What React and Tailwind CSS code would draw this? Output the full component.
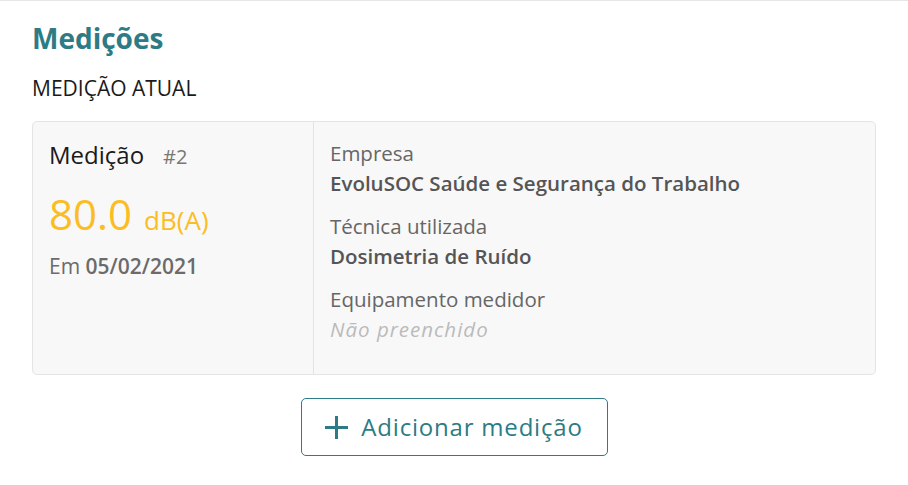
import React from "react";

const Field = ({ label, value, empty }) => (
  <div className="mb-[13px]">
    <div className="text-[20.5px] leading-[30px] text-[#666]">{label}</div>
    {empty ? (
      <div className="text-[20.5px] leading-[30px] italic tracking-[1px] text-[#bbb]">{value}</div>
    ) : (
      <div className="text-[20.5px] leading-[30px] font-semibold text-[#555]">{value}</div>
    )}
  </div>
);

const App = () => {
  return (
    <div
      className="min-h-screen bg-white border-t border-[#e6e6e6] px-8 pt-[20px]"
      style={{ fontFamily: '"Open Sans", "Noto Sans", sans-serif' }}
    >
      <h2 className="text-[28px] leading-[34px] font-bold text-[#2d7b85]">Medições</h2>
      <h3 className="mt-[19px] text-[21px] leading-[28px] text-[#1a1a1a]">MEDIÇÃO ATUAL</h3>

      <div className="mt-[19px] flex rounded-[5px] border border-[#e4e4e4] bg-[#f8f8f8]">
        <div className="w-[281px] border-r border-[#e4e4e4] px-4 pt-4">
          <div className="flex items-baseline">
            <span className="text-[24px] leading-[34px] text-[#1a1a1a]">Medição</span>
            <span className="ml-[19px] text-[20px] text-[#777]">#2</span>
          </div>
          <div className="mt-[18px] flex items-baseline text-[#fbbd24]">
            <span className="text-[42px] leading-[48px]">80.0</span>
            <span className="ml-[12px] text-[26px] font-medium">dB(A)</span>
          </div>
          <div className="mt-[11px] text-[21px] leading-[30px] text-[#6b6b6b]">
            Em <span className="font-semibold">05/02/2021</span>
          </div>
        </div>
        <div className="flex-1 px-4 pt-4 pb-[17px]">
          <Field label="Empresa" value="EvoluSOC Saúde e Segurança do Trabalho" />
          <Field label="Técnica utilizada" value="Dosimetria de Ruído" />
          <Field label="Equipamento medidor" value="Não preenchido" empty />
        </div>
      </div>

      <div className="mt-[23px] flex justify-center">
        <button className="flex h-[58px] w-[307px] items-center justify-center gap-[13px] rounded-[5px] border border-[#2d7b85] text-[#2d7b85]">
          <svg width="23" height="23" viewBox="0 0 23 23" fill="none" stroke="currentColor" strokeWidth="3">
            <line x1="11.5" y1="0" x2="11.5" y2="23" />
            <line x1="0" y1="11.5" x2="23" y2="11.5" />
          </svg>
          <span className="text-[24px] font-medium tracking-[0.8px]">Adicionar medição</span>
        </button>
      </div>
    </div>
  );
};

export default App;
